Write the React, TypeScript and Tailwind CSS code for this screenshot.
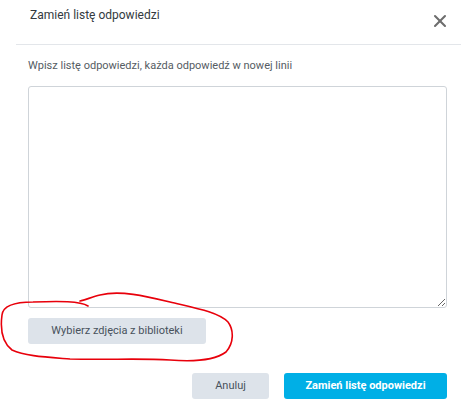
import { X } from 'lucide-react';

export default function App() {
  return (
    <div className="relative w-[461px] h-[404px] bg-white overflow-hidden font-['Roboto',sans-serif]">
      <div className="ml-[16px] h-[45px] border-b border-[#e3e6ea] flex items-start justify-between pl-[14px] pr-[11px]">
        <h2 className="mt-[7px] text-[12px] leading-[16px] text-[#333a40]">Zamień listę odpowiedzi</h2>
        <button className="mt-[11px] text-[#6e6e6e]">
          <X size={20} strokeWidth={2.5} />
        </button>
      </div>

      <div className="pl-[28px] pr-[14px]">
        <p className="mt-[14px] text-[11px] leading-[14px] text-[#555c63]">
          Wpisz listę odpowiedzi, każda odpowiedź w nowej linii
        </p>
        <textarea className="mt-[13px] block w-full h-[222px] border border-[#cfd4d9] rounded-[3px] resize-y outline-none" />
        <button className="mt-[10px] w-[178px] h-[26px] rounded-[3px] bg-[#dde3ea] text-[11px] text-[#48525c]">
          Wybierz zdjęcia z biblioteki
        </button>
        <div className="mt-[29px] flex justify-end gap-[15px]">
          <button className="w-[77px] h-[26px] rounded-[3px] bg-[#dde3ea] text-[11px] text-[#48525c]">Anuluj</button>
          <button className="w-[163px] h-[26px] rounded-[3px] bg-[#00afe6] text-[11px] font-bold text-white">
            Zamień listę odpowiedzi
          </button>
        </div>
      </div>

      <svg className="absolute left-0 top-0 pointer-events-none" width="461" height="404" viewBox="0 0 461 404">
        <path
          d="M88,306 C80,301 60,301 33,302 C15,302 3,305 2,315 C0,330 3,343 12,350 C25,356 45,357 70,359 C110,360 140,358 170,360 C195,362 215,360 226,352 C234,343 234,330 228,322 C218,312 195,308 170,302 C145,296 120,290 100,295 C92,297 85,300 80,301"
          fill="none"
          stroke="#e8000b"
          strokeWidth="1.6"
          strokeLinecap="round"
        />
      </svg>
    </div>
  );
}
